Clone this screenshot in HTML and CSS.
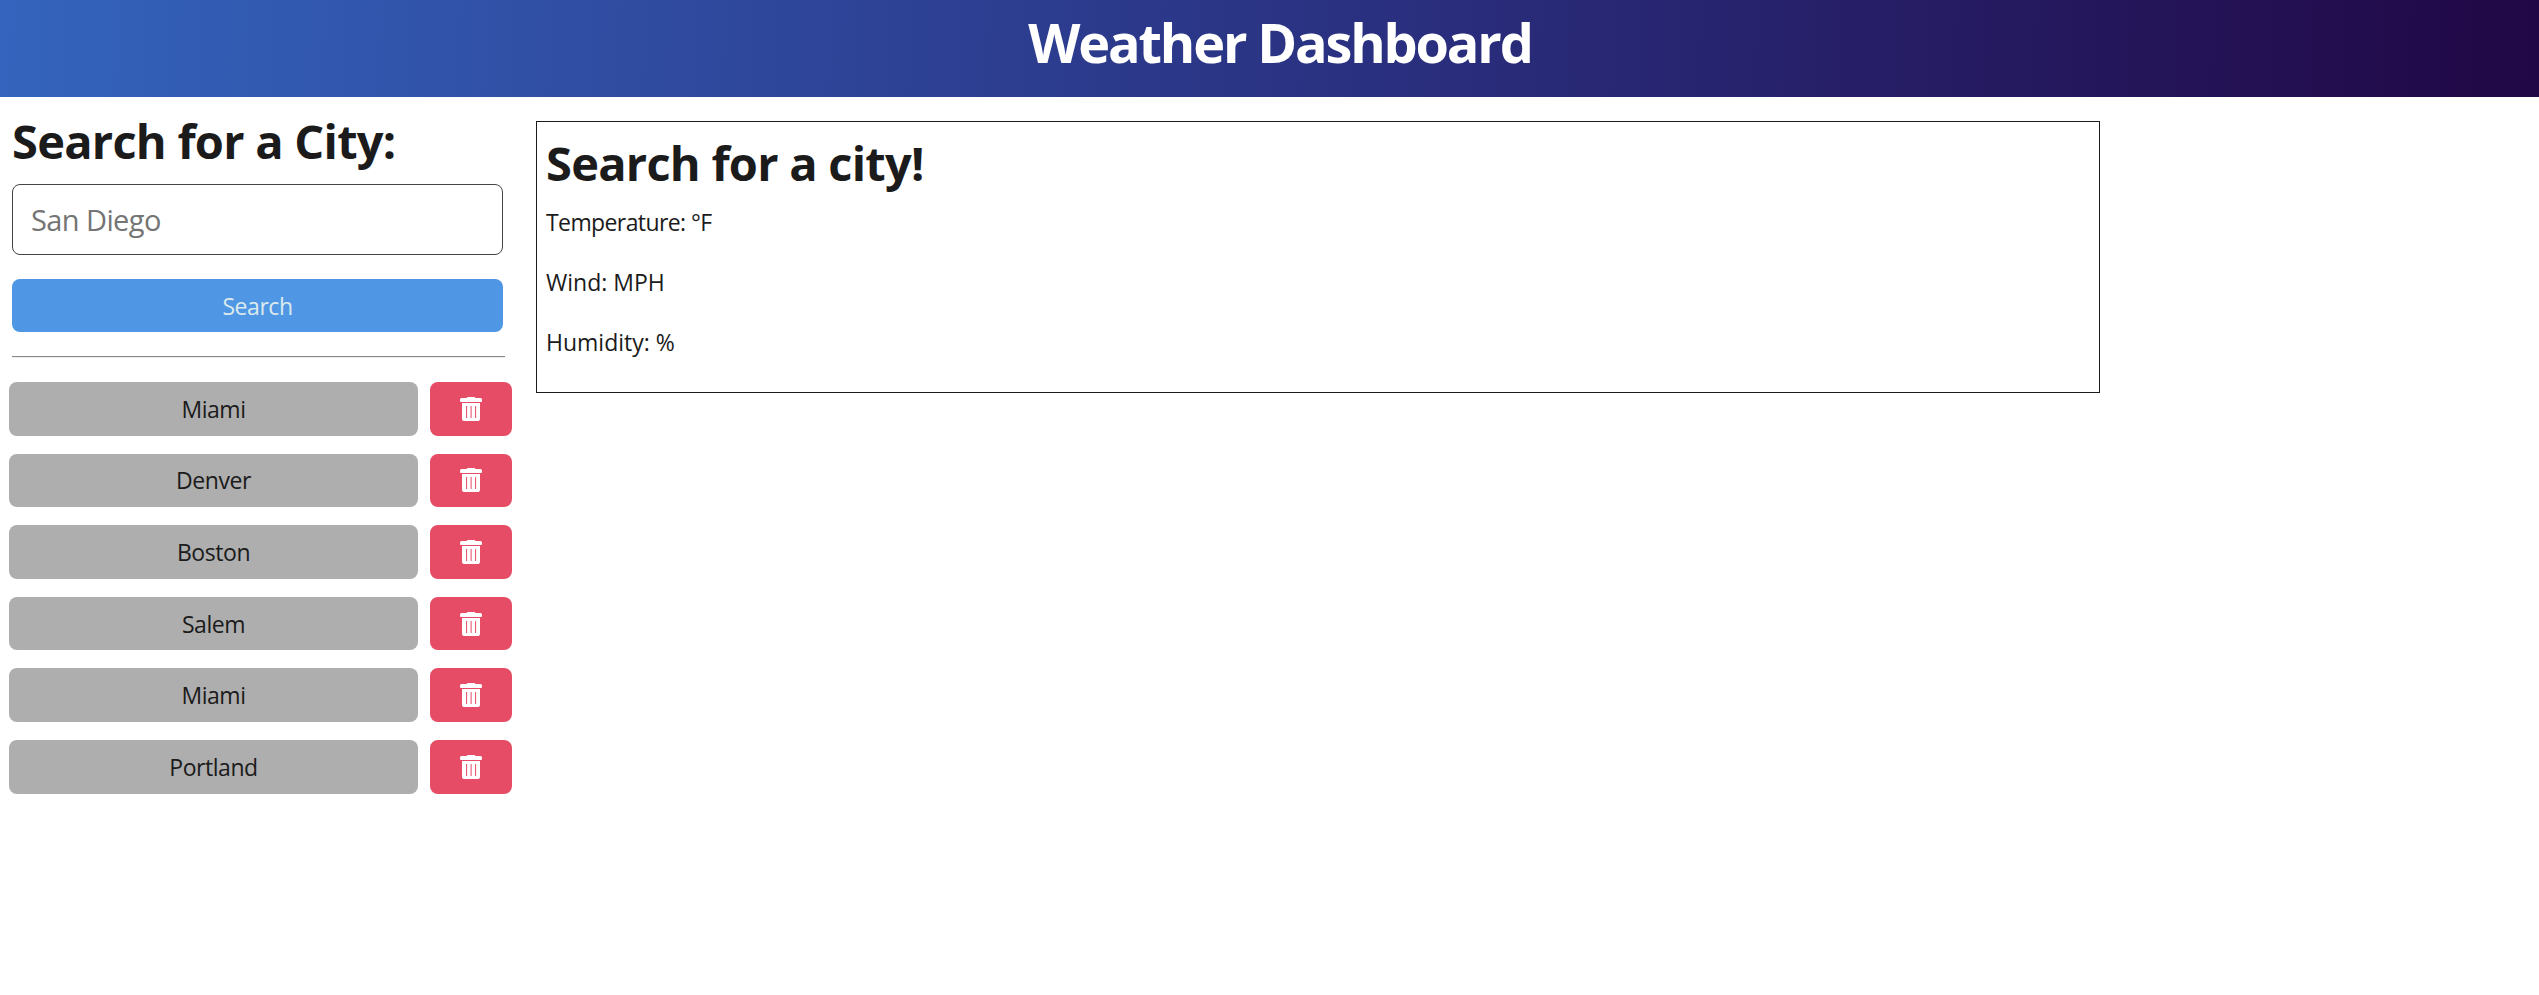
FILE: index.html
```
<!DOCTYPE html>
<html lang="en">
<head>
<meta charset="utf-8">
<title>Weather Dashboard</title>
<link rel="stylesheet" href="styles.css">
</head>
<body>
<svg class="sprite" aria-hidden="true">
  <symbol id="trash" viewBox="0 0 22 24">
    <path fill="currentColor" fill-rule="evenodd" d="M7.500 0h7l1 1h5a1.500 1.500 0 0 1 1.500 1.500v1.500q0 1-1 1H1q-1 0-1-1V2.500A1.500 1.500 0 0 1 1.500 1h5zM2 6h18v16a2 2 0 0 1-2 2H4a2 2 0 0 1-2-2zM6.100 9v12h1V9zM10.600 9v12h1V9zM15.100 9v12h1V9z"/>
  </symbol>
</svg>
<header class="header"><h1 class="title"><span>Weather Dashboard</span></h1></header>
<main class="layout">
  <aside class="sidebar">
    <form class="search">
      <h2 class="heading heading-side"><span>Search for a City:</span></h2>
      <input class="search-input" type="text" placeholder="San Diego">
      <button class="button search-button" type="button"><span>Search</span></button>
    </form>
    <hr class="divider">
    <ul class="history">
      <li class="row"><button class="button city"><span>Miami</span></button><button class="button delete" aria-label="Delete"><svg class="icon"><use href="#trash"/></svg></button></li>
      <li class="row"><button class="button city"><span>Denver</span></button><button class="button delete" aria-label="Delete"><svg class="icon"><use href="#trash"/></svg></button></li>
      <li class="row"><button class="button city"><span>Boston</span></button><button class="button delete" aria-label="Delete"><svg class="icon"><use href="#trash"/></svg></button></li>
      <li class="row"><button class="button city"><span>Salem</span></button><button class="button delete" aria-label="Delete"><svg class="icon"><use href="#trash"/></svg></button></li>
      <li class="row"><button class="button city"><span>Miami</span></button><button class="button delete" aria-label="Delete"><svg class="icon"><use href="#trash"/></svg></button></li>
      <li class="row"><button class="button city"><span>Portland</span></button><button class="button delete" aria-label="Delete"><svg class="icon"><use href="#trash"/></svg></button></li>
    </ul>
  </aside>
  <section class="current">
    <h2 class="heading heading-current"><span>Search for a city!</span></h2>
    <p class="stat temperature"><span>Temperature: °F</span></p>
    <p class="stat wind"><span>Wind: MPH</span></p>
    <p class="stat humidity"><span>Humidity: %</span></p>
  </section>
</main>
</body>
</html>
```
FILE: styles.css
```
* { box-sizing: border-box; }
body {
  margin: 0;
  background: #fff;
  color: #1b1b1b;
  font: 23px/36px "Segoe UI", "Open Sans", "Noto Sans", sans-serif;
}
.sprite { display: none; }
.header {
  height: 97px;
  padding: 10px 0 0 21px;
  background: linear-gradient(92deg, #3464bd, #2a3080 54%, #210745);
  color: #fff;
  text-align: center;
}
.title { margin: 0; font-size: 54px; line-height: 64px; letter-spacing: -2.15px; }
.layout { display: flex; align-items: flex-start; }
.sidebar { width: 536px; padding: 12px 0 0 9px; }
.search { display: flex; flex-direction: column; width: 494px; padding-left: 3px; }
.heading { margin: 0; font-size: 47px; line-height: 64px; letter-spacing: -0.75px; white-space: nowrap; }
.heading-current { margin-bottom: 9px; }
.search-input {
  height: 71px;
  margin: 11px 0 24px;
  padding: 0 18px;
  border: 1px solid #444;
  border-radius: 8px;
  font: inherit;
  font-size: 29px;
  letter-spacing: -0.6px;
}
.search-input::placeholder { color: #757575; opacity: 1; }
.button {
  display: flex;
  align-items: center;
  justify-content: center;
  height: 53.6px;
  padding: 0;
  border: 0;
  border-radius: 8px;
  color: inherit;
  font: inherit;
  letter-spacing: -0.45px;
}
.search-button { height: 53px; background: #4f97e5; color: #dce9ed; }
.divider { width: 493px; height: 2px; margin: 24px 0 24px 3px; border: 0; border-top: 1px solid #888; background: #eee; }
.history { display: flex; flex-direction: column; gap: 18px; margin: 0; padding: 0; list-style: none; }
.row { display: flex; gap: 12px; }
.city { width: 409px; background: #aeaeae; }
.delete { width: 82px; background: #e64c65; color: #fff; }
.icon { width: 22px; height: 24px; }
.current {
  width: 1564px;
  height: 272px;
  margin-top: 24px;
  padding: 9px 9px;
  border: 1px solid #1b1b1b;
}
.stat { margin: 0 0 24px; }
.temperature { letter-spacing: -0.6px; }
```
